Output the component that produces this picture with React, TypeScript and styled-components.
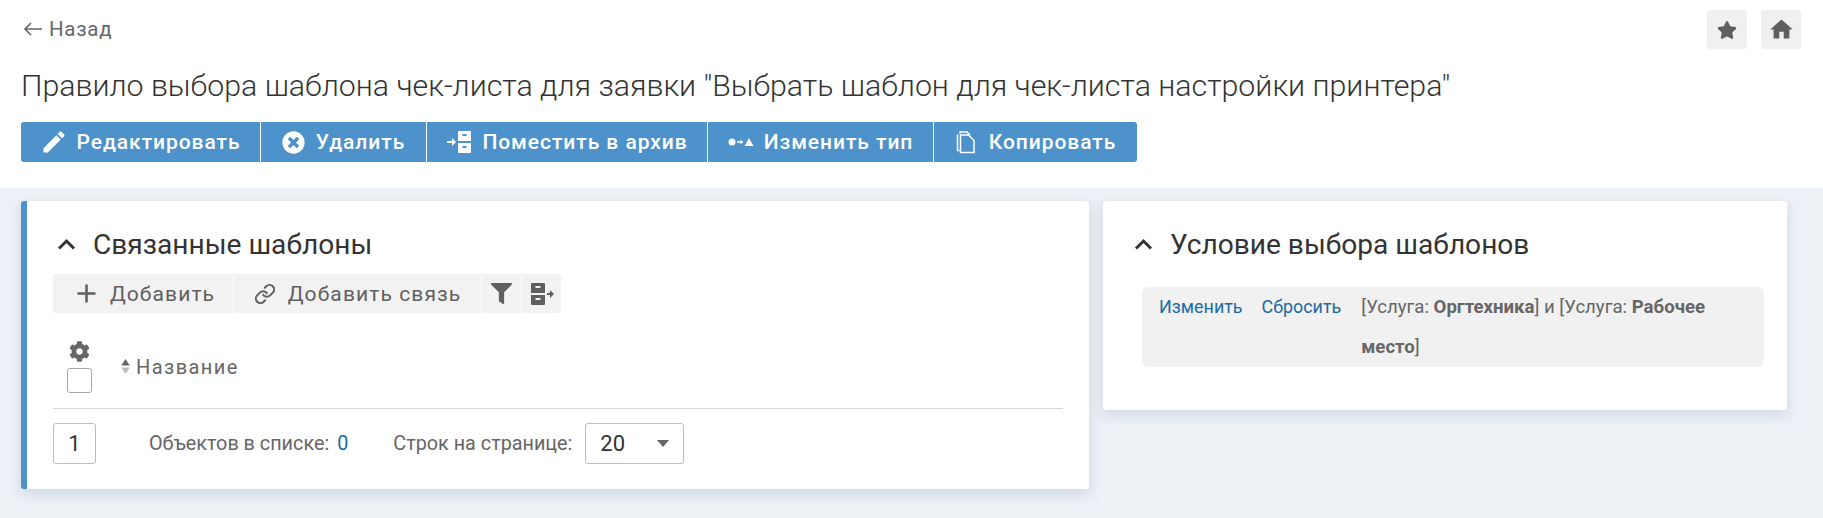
import React from "react";
import styled, { createGlobalStyle } from "styled-components";
import { FaStar, FaFilter, FaCog, FaTimesCircle } from "react-icons/fa";
import { MdEdit, MdHome, MdAdd } from "react-icons/md";
import { Link as LinkIcon } from "lucide-react";

const Global = createGlobalStyle`
  html, body { margin: 0; padding: 0; background: #eef1f6; }
  body { font-family: Roboto, "Liberation Sans", sans-serif; color: #555; width: 1823px; height: 518px; overflow: hidden; }
`;

const Header = styled.header`
  background: #fff;
  height: 188px;
  padding: 10px 22px 0 21px;
  box-sizing: border-box;
`;
const TopRow = styled.div`
  display: flex;
  justify-content: space-between;
  align-items: flex-start;
  height: 39px;
`;
const BackLink = styled.a`
  display: flex;
  align-items: center;
  gap: 6px;
  margin: -1px 0 0 2px;
  height: 39px;
  font-size: 20.500px;
  color: #666;
  letter-spacing: 0.7px;
`;
const QuickActions = styled.div`
  display: flex;
  gap: 14px;
`;
const QuickButton = styled.button`
  width: 40px;
  height: 39px;
  border: 0;
  border-radius: 3px;
  background: #f0f0f0;
  color: #5f5f5f;
  display: flex;
  align-items: center;
  justify-content: center;
  padding: 0;
  font-size: 20px;
`;
const Title = styled.h1`
  margin: 18px 0 0;
  font-size: 30.300px;
  line-height: 38px;
  font-weight: 300;
  color: #333;
  white-space: nowrap;
`;
const ActionBar = styled.div`
  display: flex;
  margin-top: 17px;
  width: 1116px;
  height: 40px;
  gap: 1px;
`;
const ActionButton = styled.button<{ $w: number; $gap: number }>`
  flex: 0 0 ${(p) => p.$w}px;
  background: #4d92ca;
  color: #fff;
  border: 0;
  padding: 0;
  display: flex;
  align-items: center;
  justify-content: center;
  gap: ${(p) => p.$gap}px;
  font-family: inherit;
  font-size: 21px;
  font-weight: 500;
  letter-spacing: 0.95px;
  white-space: nowrap;
  &:first-child { border-radius: 3px 0 0 3px; }
  &:last-child { border-radius: 0 3px 3px 0; }
`;
const Main = styled.main`
  display: flex;
  align-items: flex-start;
  gap: 14px;
  padding: 13px 0 0 21px;
`;
const Card = styled.section<{ $w: number; $h: number; $accent?: boolean }>`
  width: ${(p) => p.$w}px;
  height: ${(p) => p.$h}px;
  box-sizing: border-box;
  background: #fff;
  border-radius: 3px;
  border-left: ${(p) => (p.$accent ? "6px solid #4d92ca" : "0")};
  box-shadow: 0 5px 14px rgba(150, 165, 190, 0.35);
  padding: ${(p) => (p.$accent ? "24px 26px 0 26px" : "24px 23px 0 27px")};
`;
const CardTitle = styled.h2`
  display: flex;
  align-items: center;
  gap: 14px;
  margin: 0;
  height: 38px;
  font-size: 28.100px;
  font-weight: 400;
  color: #333;
`;
const ChevronSvg = styled.svg`
  width: 19px;
  height: 12px;
  flex: none;
  margin: 0 3px 0 4px;
`;
const Toolbar = styled.div`
  display: flex;
  gap: 1px;
  margin-top: 11px;
  height: 39px;
`;
const ToolButton = styled.button<{ $w: number; $gap: number }>`
  flex: 0 0 ${(p) => p.$w}px;
  background: #f2f2f2;
  border: 0;
  padding: 0;
  color: #606060;
  font-family: inherit;
  font-size: 21px;
  letter-spacing: 1.1px;
  display: flex;
  align-items: center;
  justify-content: center;
  gap: ${(p) => p.$gap}px;
  white-space: nowrap;
  &:first-child { border-radius: 3px 0 0 3px; }
  &:last-child { border-radius: 0 3px 3px 0; }
`;
const TableHead = styled.div`
  display: flex;
  align-items: center;
  height: 96px;
  padding-top: 6px;
  border-bottom: 1px solid #d6d6d6;
  box-sizing: border-box;
`;
const SelectCell = styled.div`
  flex: 0 0 32px;
  margin: 0 25px 0 10px;
  display: flex;
  flex-direction: column;
  align-items: center;
  gap: 6px;
  color: #666;
  font-size: 21px;
  padding-top: 6px;
`;
const CheckBox = styled.span`
  width: 25px;
  height: 25px;
  box-sizing: border-box;
  border: 1px solid #a8a8a8;
  border-radius: 3px;
  background: #fff;
`;
const SortLabel = styled.div`
  display: flex;
  align-items: center;
  gap: 5px;
  margin-top: 6px;
  font-size: 20px;
  letter-spacing: 1.45px;
  color: #666;
`;
const Pagination = styled.div`
  display: flex;
  align-items: center;
  margin-top: 14px;
  height: 41px;
  font-size: 19.800px;
  color: #666;
  white-space: nowrap;
`;
const PageBox = styled.span`
  width: 43px;
  height: 41px;
  box-sizing: border-box;
  border: 1px solid #bdbdbd;
  border-radius: 3px;
  display: flex;
  align-items: center;
  justify-content: center;
  font-size: 22px;
  color: #333;
  margin-right: 53px;
`;
const Count = styled.span`
  color: #1b6aa5;
  margin-left: 8px;
  margin-right: 45px;
`;
const SelectBox = styled.span`
  width: 99px;
  height: 41px;
  box-sizing: border-box;
  border: 1px solid #bdbdbd;
  border-radius: 3px;
  margin-left: 13px;
  padding: 0 14px;
  display: flex;
  align-items: center;
  justify-content: space-between;
  font-size: 22px;
  color: #333;
`;
const Caret = styled.span`
  width: 0;
  height: 0;
  border-left: 6.5px solid transparent;
  border-right: 6.5px solid transparent;
  border-top: 7px solid #666;
`;
const ConditionBox = styled.div`
  display: grid;
  grid-template-columns: auto auto 1fr;
  margin: 24px 0 0 12px;
  width: 622px;
  height: 80px;
  box-sizing: border-box;
  background: #f1f1f1;
  border-radius: 6px;
  padding: 0 17px;
  font-size: 17.900px;
  line-height: 40px;
  color: #666;
`;
const ConditionLink = styled.a<{ $mr: number }>`
  color: #1b6aa5;
  margin-right: ${(p) => p.$mr}px;
`;
const ConditionText = styled.span`
  font-size: 18.600px;
`;

const Chevron = () => (
  <ChevronSvg viewBox="0 0 19 12" fill="none" stroke="#333" strokeWidth="3">
    <path d="M2 10.500l7.500-7.500 7.500 7.500" />
  </ChevronSvg>
);
const ArchiveIn = () => (
  <svg width="26" height="24" viewBox="0 0 26 24" fill="#fff">
    <path d="M1 11h5V8l4 4-4 4v-3H1z" />
    <path d="M13 1h11a1 1 0 0 1 1 1v9H12V2a1 1 0 0 1 1-1zm3.500 3v2h4V4zM12 13h13v9a1 1 0 0 1-1 1H13a1 1 0 0 1-1-1zm4.500 3v2h4v-2z" fillRule="evenodd" />
  </svg>
);
const ChangeType = () => (
  <svg width="26" height="12" viewBox="0 0 26 12" fill="#fff">
    <circle cx="4" cy="6" r="3.500" />
    <path d="M9 5.200h3.500V3.500L15.500 6l-3 2.500V6.800H9z" />
    <path d="M21 2l4.500 8h-9z" />
  </svg>
);
const CopyIcon = () => (
  <svg width="22" height="24" viewBox="0 0 20 24" fill="none" stroke="#fff" strokeWidth="1.500">
    <path d="M4 3.500V2h7l3 3" />
    <path d="M1.500 4.500v16h2" />
    <path d="M4.500 5h8l5.500 5.500V22.500H4.500z" />
  </svg>
);
const ArchiveOut = () => (
  <svg width="26" height="24" viewBox="0 0 26 24" fill="#606060">
    <path d="M3 1h12a1 1 0 0 1 1 1v9H2V2a1 1 0 0 1 1-1zm3.500 3v2h5V4zM2 13h14v9a1 1 0 0 1-1 1H3a1 1 0 0 1-1-1zm4.500 3v2h5v-2z" fillRule="evenodd" />
    <path d="M18 11h3V8l4 4-4 4v-3h-3z" />
  </svg>
);
const SortIcon = () => (
  <svg width="11" height="17" viewBox="0 0 10 16">
    <path d="M5 1l4 6H1z" fill="#666" />
    <path d="M5 15L1 9h8z" fill="#bbb" />
  </svg>
);
const BackArrow = () => (
  <svg width="20" height="14" viewBox="0 0 20 14" fill="none" stroke="#666" strokeWidth="1.600">
    <path d="M19 7H2M8 1L2 7l6 6" />
  </svg>
);

export default function App() {
  return (
    <>
      <Global />
      <Header>
        <TopRow>
          <BackLink><BackArrow />Назад</BackLink>
          <QuickActions>
            <QuickButton><FaStar /></QuickButton>
            <QuickButton><MdHome size={27} /></QuickButton>
          </QuickActions>
        </TopRow>
        <Title>Правило выбора шаблона чек-листа для заявки "Выбрать шаблон для чек-листа настройки принтера"</Title>
        <ActionBar>
          <ActionButton $w={239} $gap={8}><MdEdit size={28} />Редактировать</ActionButton>
          <ActionButton $w={165} $gap={11}><FaTimesCircle size={23} />Удалить</ActionButton>
          <ActionButton $w={280} $gap={10}><ArchiveIn />Поместить в архив</ActionButton>
          <ActionButton $w={225} $gap={10}><ChangeType />Изменить тип</ActionButton>
          <ActionButton $w={203} $gap={12}><CopyIcon />Копировать</ActionButton>
        </ActionBar>
      </Header>
      <Main>
        <Card $w={1068} $h={288} $accent>
          <CardTitle><Chevron />Связанные шаблоны</CardTitle>
          <Toolbar>
            <ToolButton $w={180} $gap={8}><MdAdd size={31} />Добавить</ToolButton>
            <ToolButton $w={247} $gap={12}><LinkIcon size={22} strokeWidth={2.2} />Добавить связь</ToolButton>
            <ToolButton $w={39} $gap={0}><FaFilter size={21} /></ToolButton>
            <ToolButton $w={39} $gap={0}><ArchiveOut /></ToolButton>
          </Toolbar>
          <TableHead>
            <SelectCell><FaCog /><CheckBox /></SelectCell>
            <SortLabel><SortIcon />Название</SortLabel>
          </TableHead>
          <Pagination>
            <PageBox>1</PageBox>
            Объектов в списке:
            <Count>0</Count>
            Строк на странице:
            <SelectBox>20<Caret /></SelectBox>
          </Pagination>
        </Card>
        <Card $w={684} $h={209}>
          <CardTitle><Chevron />Условие выбора шаблонов</CardTitle>
          <ConditionBox>
            <ConditionLink $mr={19}>Изменить</ConditionLink>
            <ConditionLink $mr={20}>Сбросить</ConditionLink>
            <ConditionText>[Услуга: <b>Оргтехника</b>] и [Услуга: <b>Рабочее</b> <b>место</b>]</ConditionText>
          </ConditionBox>
        </Card>
      </Main>
    </>
  );
}
